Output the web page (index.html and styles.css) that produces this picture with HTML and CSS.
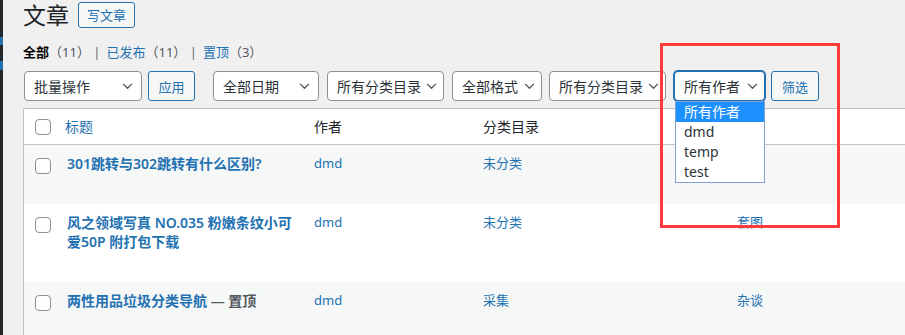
FILE: index.html
```html
<!DOCTYPE html>
<html lang="zh-CN">
<head>
    <meta charset="UTF-8">
    <meta name="viewport" content="width=device-width, initial-scale=1.0">
    <title>文章</title>

    <link rel="stylesheet" href="styles.css">
</head>
<body>

    <div class="admin-edge">
        <span class="edge-mark mark-one"></span>
        <span class="edge-mark mark-two"></span>
    </div>

    <div class="wrap">
        <div class="page-head">
            <h1>文章</h1>
            <a class="page-title-action" href="#">写文章</a>
        </div>

        <ul class="subsubsub">
            <li><a class="current" href="#">全部<span class="count">（11）</span></a> |</li>
            <li><a href="#">已发布<span class="count">（11）</span></a> |</li>
            <li><a href="#">置顶<span class="count">（3）</span></a></li>
        </ul>

        <div class="tablenav">
            <div class="fake-select sel-bulk">批量操作
                <svg class="chev" viewBox="0 0 12 8" width="11" height="7"><polyline points="1,1 6,6 11,1" fill="none" stroke="#50575e" stroke-width="1.6"/></svg>
            </div>
            <button class="btn btn-apply">应用</button>
            <div class="fake-select sel-date">全部日期
                <svg class="chev" viewBox="0 0 12 8" width="11" height="7"><polyline points="1,1 6,6 11,1" fill="none" stroke="#50575e" stroke-width="1.6"/></svg>
            </div>
            <div class="fake-select sel-cat">所有分类目录
                <svg class="chev" viewBox="0 0 12 8" width="11" height="7"><polyline points="1,1 6,6 11,1" fill="none" stroke="#50575e" stroke-width="1.6"/></svg>
            </div>
            <div class="fake-select sel-format">全部格式
                <svg class="chev" viewBox="0 0 12 8" width="11" height="7"><polyline points="1,1 6,6 11,1" fill="none" stroke="#50575e" stroke-width="1.6"/></svg>
            </div>
            <div class="fake-select sel-cat">所有分类目录
                <svg class="chev" viewBox="0 0 12 8" width="11" height="7"><polyline points="1,1 6,6 11,1" fill="none" stroke="#50575e" stroke-width="1.6"/></svg>
            </div>
            <div class="author-holder">
                <div class="fake-select sel-author focused">所有作者
                    <svg class="chev" viewBox="0 0 12 8" width="11" height="7"><polyline points="1,1 6,6 11,1" fill="none" stroke="#50575e" stroke-width="1.6"/></svg>
                </div>
                <ul class="option-list">
                    <li class="picked">所有作者</li>
                    <li>dmd</li>
                    <li>temp</li>
                    <li>test</li>
                </ul>
            </div>
            <button class="btn btn-filter">筛选</button>
        </div>

        <table class="posts">
            <colgroup>
                <col class="col-cb">
                <col class="col-title">
                <col class="col-author">
                <col class="col-cat">
                <col class="col-tags">
                <col>
            </colgroup>
            <thead>
                <tr>
                    <th class="check-column"><span class="cb"></span></th>
                    <th><a href="#" class="sort-link">标题</a></th>
                    <th>作者</th>
                    <th>分类目录</th>
                    <th>标签</th>
                    <th></th>
                </tr>
            </thead>
            <tbody>
                <tr class="alt">
                    <td class="check-column"><span class="cb"></span></td>
                    <td class="title-cell"><a href="#" class="row-title">301跳转与302跳转有什么区别?</a></td>
                    <td><a href="#">dmd</a></td>
                    <td><a href="#">未分类</a></td>
                    <td></td>
                    <td></td>
                </tr>
                <tr>
                    <td class="check-column"><span class="cb"></span></td>
                    <td class="title-cell"><a href="#" class="row-title">风之领域写真 NO.035 粉嫩条纹小可爱50P 附打包下载</a></td>
                    <td><a href="#">dmd</a></td>
                    <td><a href="#">未分类</a></td>
                    <td><a href="#">套图</a></td>
                    <td></td>
                </tr>
                <tr class="alt">
                    <td class="check-column"><span class="cb"></span></td>
                    <td class="title-cell"><a href="#" class="row-title">两性用品垃圾分类导航</a> <span class="post-state">— 置顶</span></td>
                    <td><a href="#">dmd</a></td>
                    <td><a href="#">采集</a></td>
                    <td><a href="#">杂谈</a></td>
                    <td></td>
                </tr>
            </tbody>
        </table>
    </div>

    <div class="red-mark"></div>

</body>
</html>
```

FILE: styles.css
```css
* {
    box-sizing: border-box;
}

html, body {
    margin: 0;
    height: 100%;
    overflow: hidden;
}

body {
    display: flex;
    background-color: #f0f0f1;
    color: #2c3338;
    font-family: "Noto Sans", "Noto Sans CJK SC", sans-serif;
    font-size: 13px;
}

a {
    color: #2271b1;
    text-decoration: none;
}

.admin-edge {
    position: relative;
    flex: 0 0 3px;
    background-color: #23282d;
}

.edge-mark {
    display: block;
    height: 8px;
    background-color: #2271b1;
}
.mark-one {margin-top: 37px;}
.mark-two {margin-top: 16px; height: 9px;}

.wrap {
    flex: 1;
    padding-left: 20px;
}

.page-head {
    display: flex;
    align-items: center;
    height: 30px;
}

.page-head h1 {
    margin: 0;
    font-size: 23px;
    font-weight: 400;
    line-height: 30px;
    color: #1d2327;
}

.page-title-action {
    margin-left: 9px;
    border: 1px solid #2271b1;
    border-radius: 3px;
    background-color: #f6f7f7;
    padding: 0 8px;
    line-height: 24px;
    font-size: 13px;
}

.subsubsub {
    display: flex;
    list-style: none;
    margin: 12px 0 0;
    padding: 0;
    line-height: 20px;
    color: #646970;
}

.subsubsub li {
    margin-right: 6px;
    white-space: pre;
}

.subsubsub .current {
    color: #000;
    font-weight: 600;
}

.subsubsub .count {
    color: #50575e;
    font-weight: 400;
}

.tablenav {
    display: flex;
    align-items: flex-start;
    margin-top: 9px;
    height: 30px;
}

.fake-select {
    display: flex;
    align-items: center;
    justify-content: space-between;
    height: 30px;
    padding: 0 8px 0 9px;
    border: 1px solid #8c8f94;
    border-radius: 4px;
    background-color: #fff;
    font-size: 14px;
    color: #2c3338;
    margin-right: 8px;
    white-space: nowrap;
}

.chev {
    flex: 0 0 auto;
    margin-left: 4px;
}

.sel-bulk {width: 118px; margin-left: 1px; margin-right: 6px;}
.sel-date {width: 106px;}
.sel-cat {width: 117px; padding-right: 6px;}
.sel-format {width: 90px; padding-right: 6px; margin-right: 7px;}
.sel-author {width: 91px; padding-right: 6px; margin-right: 0;}

.focused {
    border-color: #2271b1;
    box-shadow: 0 0 0 1px #2271b1;
}

.btn {
    height: 30px;
    border: 1px solid #2271b1;
    border-radius: 3px;
    background-color: #f6f7f7;
    color: #2271b1;
    font-family: inherit;
    font-size: 13px;
    padding: 0 6px;
    white-space: nowrap;
}

.btn-apply {width: 47px; margin-right: 18px;}
.btn-filter {width: 48px; margin-left: 6px;}

.author-holder {
    position: relative;
}

.option-list {
    position: absolute;
    left: 1px;
    top: 30px;
    width: 90px;
    margin: 0;
    padding: 0;
    list-style: none;
    background-color: #fff;
    border: 1px solid #7f9fd6;
    font-size: 14px;
    z-index: 5;
}

.option-list li {
    height: 20px;
    line-height: 20px;
    padding-left: 8px;
    color: #2c3338;
}

.option-list .picked {
    background-color: #1e90ff;
    color: #fff;
}

.posts {
    margin-top: 7px;
    width: 1000px;
    table-layout: fixed;
    border: 1px solid #c3c4c7;
    border-spacing: 0;
    background-color: #fff;
}

.col-cb {width: 34px;}
.col-title {width: 246px;}
.col-author {width: 169px;}
.col-cat {width: 254px;}
.col-tags {width: 220px;}

.posts th {
    text-align: left;
    font-weight: 400;
    font-size: 14px;
    line-height: 19px;
    padding: 8px 10px;
    border-bottom: 1px solid #c3c4c7;
    color: #1d2327;
    vertical-align: middle;
}

.posts th:nth-child(2) {padding-left: 7px;}

.posts td {
    font-size: 13px;
    line-height: 19px;
    padding: 9px 10px 31px;
    vertical-align: top;
}

.posts td.title-cell {
    font-size: 14px;
    padding-left: 9px;
    padding-right: 8px;
}

.posts .check-column {
    padding: 0 0 0 11px;
}

.posts td.check-column {
    padding-top: 13px;
}

.cb {
    display: block;
    width: 16px;
    height: 16px;
    border: 1px solid #8c8f94;
    border-radius: 4px;
    background-color: #fff;
}

.alt {
    background-color: #f6f7f7;
}

.row-title {
    font-weight: 600;
}

.post-state {
    font-weight: 600;
    color: #50575e;
}

.red-mark {
    position: absolute;
    left: 660px;
    top: 43px;
    width: 180px;
    height: 185px;
    border: 3px solid #fd3a3a;
    pointer-events: none;
}
```
